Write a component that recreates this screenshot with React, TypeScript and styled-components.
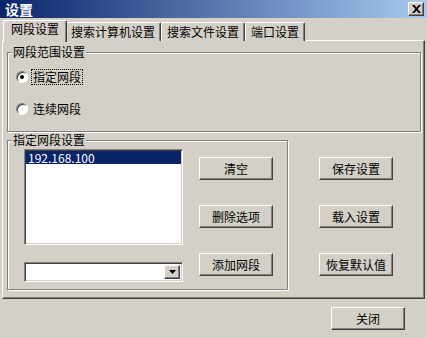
import React from 'react';
import styled, { createGlobalStyle } from 'styled-components';

const GlobalStyle = createGlobalStyle`
  body {
    margin: 0;
    background: #d4d0c8;
    font-family: "Noto Sans CJK SC", "Liberation Sans", sans-serif;
    font-size: 12px;
    color: #000;
  }
`;

const Window = styled.div`
  width: 427px;
  height: 338px;
  display: flex;
  flex-direction: column;
  background: #d4d0c8;
  overflow: hidden;
`;

const TitleBar = styled.div`
  height: 18px;
  display: flex;
  align-items: center;
  justify-content: space-between;
  padding: 0 3px 0 5px;
  background: linear-gradient(90deg, #0a246a 0%, #a6caf0 100%);
  color: #fff;
  font-weight: bold;
  font-size: 14px;
  line-height: 18px;
`;

const CloseBox = styled.div`
  width: 14px;
  height: 12px;
  display: flex;
  align-items: center;
  justify-content: center;
  background: #d4d0c8;
  border: 1px solid;
  border-color: #fff #404040 #404040 #fff;
  box-shadow: inset -1px -1px #808080;
`;

const TabStrip = styled.div`
  height: 21px;
  margin-top: 2px;
  margin-bottom: -1px;
  padding-left: 5px;
  display: flex;
  align-items: flex-start;
`;

const Tab = styled.div<{ active?: boolean }>`
  position: relative;
  z-index: ${p => (p.active ? 1 : 0)};
  height: ${p => (p.active ? '21px' : '18px')};
  margin: ${p => (p.active ? '0 -2px' : '2px 0 0 0')};
  padding: ${p => (p.active ? '0 7px' : '0 5px')};
  line-height: ${p => (p.active ? '16px' : '17px')};
  background: #d4d0c8;
  border: 1px solid;
  border-bottom: none;
  border-color: #fff #404040 #404040 #fff;
  border-radius: 2px 2px 0 0;
  box-shadow: inset -1px 0 #808080;
  white-space: nowrap;
`;

const Panel = styled.div`
  margin: 0 2px;
  height: 253px;
  padding: 4px 3px 0 4px;
  border: 1px solid;
  border-color: #fff #404040 #404040 #fff;
  box-shadow: inset -1px -1px #808080;
  display: flex;
  flex-direction: column;
`;

const Group = styled.fieldset<{ width?: number }>`
  margin: 0;
  min-width: 0;
  padding: 0;
  width: ${p => (p.width ? `${p.width}px` : 'auto')};
  box-sizing: border-box;
  border: 1px solid #808080;
  box-shadow: inset 1px 1px #fff, 1px 1px #fff;
`;

const Legend = styled.legend`
  margin-left: 4px;
  padding: 0 1px;
  line-height: 14px;
  background: #d4d0c8;
`;

const RadioList = styled.div`
  display: flex;
  flex-direction: column;
  gap: 16px;
  padding: 10px 0 14px 8px;
`;

const RadioRow = styled.label`
  display: flex;
  align-items: center;
  height: 16px;
  gap: 4px;
`;

const RadioCircle = styled.span<{ checked?: boolean }>`
  width: 12px;
  height: 12px;
  box-sizing: border-box;
  border-radius: 50%;
  background: #fff;
  border: 1px solid;
  border-color: #808080 #fff #fff #808080;
  box-shadow: inset 1px 1px #404040;
  display: flex;
  align-items: center;
  justify-content: center;

  &::after {
    content: '';
    width: 4px;
    height: 4px;
    border-radius: 50%;
    background: ${p => (p.checked ? '#000' : 'transparent')};
  }
`;

const RadioText = styled.span<{ focused?: boolean }>`
  padding: 0 1px;
  line-height: 14px;
  outline: ${p => (p.focused ? '1px dotted #000' : 'none')};
`;

const LowerRow = styled.div`
  display: flex;
  margin-top: 1px;
`;

const GroupBody = styled.div`
  display: flex;
  padding: 2px 0 7px 16px;
  gap: 16px;
`;

const ListColumn = styled.div`
  display: flex;
  flex-direction: column;
  gap: 17px;
`;

const ListBox = styled.div`
  width: 159px;
  height: 96px;
  box-sizing: border-box;
  background: #fff;
  border: 1px solid;
  border-color: #808080 #fff #fff #808080;
  box-shadow: inset 1px 1px #404040, inset -1px -1px #d4d0c8;
  padding: 1px;
`;

const ListItem = styled.div<{ selected?: boolean }>`
  height: 13px;
  line-height: 13px;
  padding-left: 2px;
  background: ${p => (p.selected ? '#0a246a' : 'transparent')};
  color: ${p => (p.selected ? '#fff' : '#000')};
`;

const Combo = styled.div`
  width: 159px;
  height: 20px;
  box-sizing: border-box;
  background: #fff;
  border: 1px solid;
  border-color: #808080 #fff #fff #808080;
  box-shadow: inset 1px 1px #404040, inset -1px -1px #d4d0c8;
  display: flex;
  justify-content: flex-end;
  padding: 2px;
`;

const ComboArrow = styled.div`
  width: 16px;
  box-sizing: border-box;
  background: #d4d0c8;
  border: 1px solid;
  border-color: #fff #404040 #404040 #fff;
  box-shadow: inset -1px -1px #808080;
  display: flex;
  align-items: center;
  justify-content: center;
`;

const ButtonColumn = styled.div<{ top: number }>`
  display: flex;
  flex-direction: column;
  gap: 25px;
  padding-top: ${p => p.top}px;
`;

const Button = styled.button`
  width: 74px;
  height: 23px;
  box-sizing: border-box;
  padding: 0;
  font-family: inherit;
  font-size: 12px;
  color: #000;
  background: #d4d0c8;
  border: 1px solid;
  border-color: #fff #404040 #404040 #fff;
  box-shadow: inset -1px -1px #808080;
`;

const SideColumn = styled(ButtonColumn)`
  margin-left: 31px;
`;

const Footer = styled.div`
  display: flex;
  justify-content: flex-end;
  padding: 8px 22px 0 0;
`;

const App: React.FC = () => {
  return (
    <>
      <GlobalStyle />
      <Window>
        <TitleBar>
          <span>设置</span>
          <CloseBox>
            <svg width="9" height="8" viewBox="0 0 9 8">
              <path d="M0 0h2.4l2.1 2.6L6.6 0H9L5.7 4 9 8H6.6L4.5 5.4 2.4 8H0l3.3-4z" fill="#000" />
            </svg>
          </CloseBox>
        </TitleBar>
        <TabStrip>
          <Tab active>网段设置</Tab>
          <Tab>搜索计算机设置</Tab>
          <Tab>搜索文件设置</Tab>
          <Tab>端口设置</Tab>
        </TabStrip>
        <Panel>
          <Group>
            <Legend>网段范围设置</Legend>
            <RadioList>
              <RadioRow>
                <RadioCircle checked />
                <RadioText focused>指定网段</RadioText>
              </RadioRow>
              <RadioRow>
                <RadioCircle />
                <RadioText>连续网段</RadioText>
              </RadioRow>
            </RadioList>
          </Group>
          <LowerRow>
            <Group width={281}>
              <Legend>指定网段设置</Legend>
              <GroupBody>
                <ListColumn>
                  <ListBox>
                    <ListItem selected>192.168.100</ListItem>
                  </ListBox>
                  <Combo>
                    <ComboArrow>
                      <svg width="7" height="4" viewBox="0 0 7 4">
                        <path d="M0 0h7L3.5 4z" fill="#000" />
                      </svg>
                    </ComboArrow>
                  </Combo>
                </ListColumn>
                <ButtonColumn top={8}>
                  <Button>清空</Button>
                  <Button>删除选项</Button>
                  <Button>添加网段</Button>
                </ButtonColumn>
              </GroupBody>
            </Group>
            <SideColumn top={24}>
              <Button>保存设置</Button>
              <Button>载入设置</Button>
              <Button>恢复默认值</Button>
            </SideColumn>
          </LowerRow>
        </Panel>
        <Footer>
          <Button>关闭</Button>
        </Footer>
      </Window>
    </>
  );
};

export default App;
